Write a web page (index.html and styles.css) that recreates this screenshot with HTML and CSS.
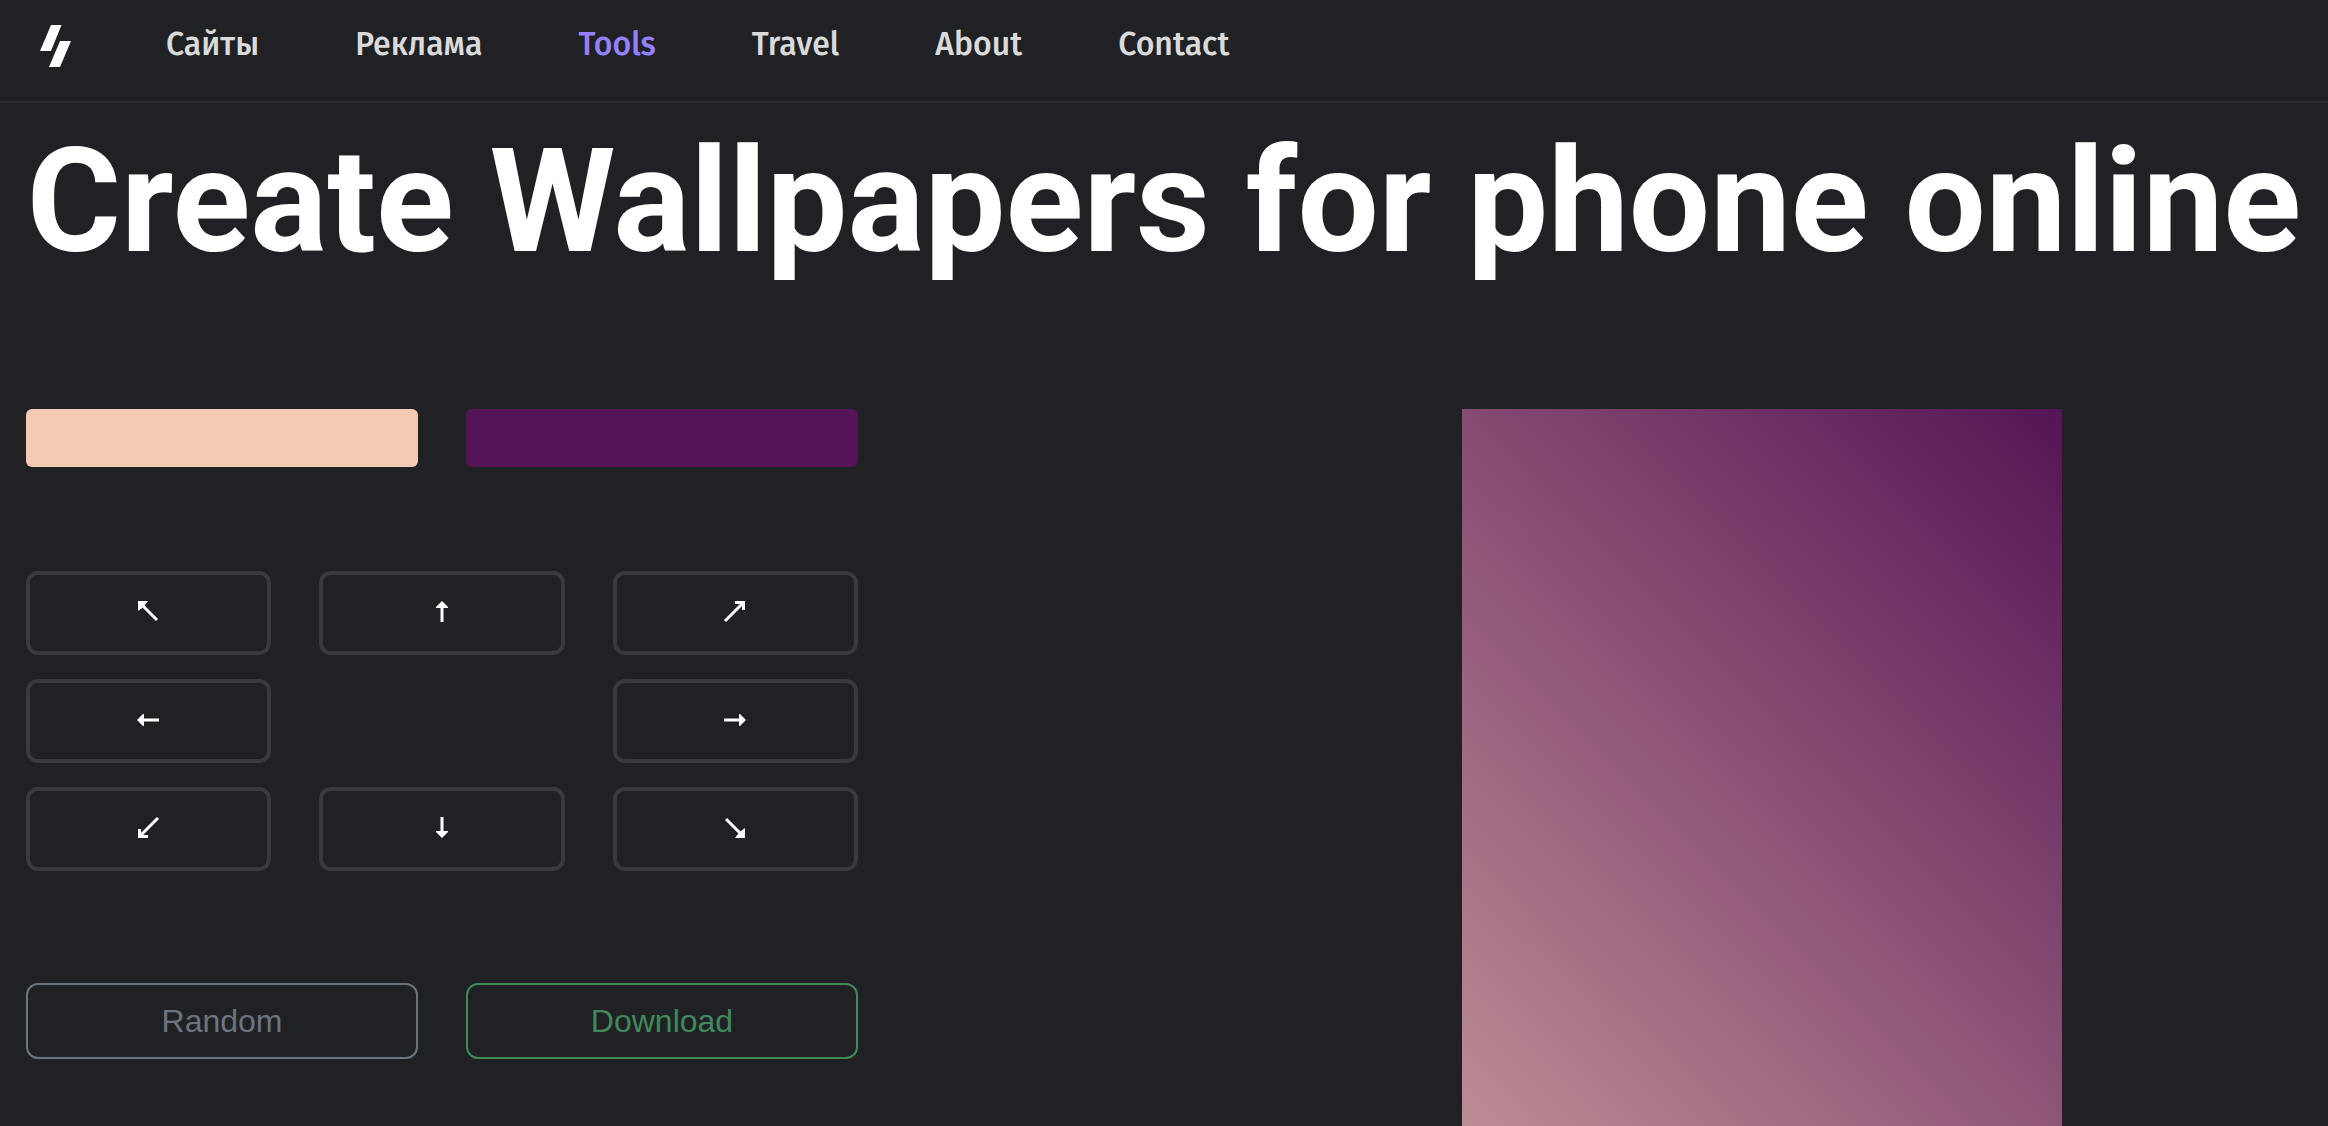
FILE: index.html
```html
<!DOCTYPE html>
<html lang="en">
<head>
<meta charset="utf-8">
<meta name="viewport" content="width=device-width, initial-scale=1">
<title>Create Wallpapers for phone online</title>
<link rel="stylesheet" href="styles.css">
</head>
<body>
<header class="header">
  <a class="logo" href="#" aria-label="Home">
    <svg width="32" height="42" viewBox="0 0 32 42" aria-hidden="true"><path fill="#fff" d="M11 0H21.500L11 26H0Z M20 16H31L20 42H9Z"/></svg>
  </a>
  <nav class="nav">
    <a class="nav-link" href="#">Сайты</a>
    <a class="nav-link" href="#">Реклама</a>
    <a class="nav-link nav-link-active" href="#">Tools</a>
    <a class="nav-link" href="#">Travel</a>
    <a class="nav-link" href="#">About</a>
    <a class="nav-link" href="#">Contact</a>
  </nav>
</header>
<main class="main">
  <h1 class="title">Create Wallpapers for phone online</h1>
  <div class="workspace">
    <div class="controls">
      <div class="pair">
        <input class="swatch" type="color" value="#f4cab5" aria-label="First color">
        <input class="swatch" type="color" value="#551455" aria-label="Second color">
      </div>
      <div class="directions">
        <button class="direction" type="button" aria-label="Top left"><svg class="arrow" viewBox="0 0 24 24"><path class="shaft" d="M5 4L20 19"/><path d="M1 0H11L8 4L5 7L1 10Z"/></svg></button>
        <button class="direction" type="button" aria-label="Top"><svg class="arrow" viewBox="0 0 24 24"><path class="shaft" d="M12 5V21"/><path d="M12 0L18 6V7H6V6Z"/></svg></button>
        <button class="direction" type="button" aria-label="Top right"><svg class="arrow" viewBox="0 0 24 24"><path class="shaft" d="M2 20L20 2M12 1.500H20.500V9"/></svg></button>
        <button class="direction" type="button" aria-label="Left"><svg class="arrow" viewBox="0 0 24 24"><path class="shaft" d="M5 11H22"/><path d="M0 11L6 5H7V17H6Z"/></svg></button>
        <button class="direction direction-right" type="button" aria-label="Right"><svg class="arrow" viewBox="0 0 24 24"><path class="shaft" d="M1 11H18"/><path d="M23 11L17 5H16V17H17Z"/></svg></button>
        <button class="direction" type="button" aria-label="Bottom left"><svg class="arrow" viewBox="0 0 24 24"><path class="shaft" d="M21 1L3 19M2.500 12V19.500H11"/></svg></button>
        <button class="direction" type="button" aria-label="Bottom"><svg class="arrow" viewBox="0 0 24 24"><path class="shaft" d="M12 0V16"/><path d="M12 21L18 15V14H6V15Z"/></svg></button>
        <button class="direction" type="button" aria-label="Bottom right"><svg class="arrow" viewBox="0 0 24 24"><path class="shaft" d="M3 2L18 17"/><path d="M22 21H12L15 17L18 14L22 11Z"/></svg></button>
      </div>
      <div class="pair">
        <button class="action action-random" type="button">Random</button>
        <button class="action action-download" type="button">Download</button>
      </div>
    </div>
    <div class="preview-column">
      <div class="preview" role="img" aria-label="Wallpaper preview"></div>
    </div>
  </div>
</main>
</body>
</html>
```
FILE: styles.css
```css
* {
  box-sizing: border-box;
}

body {
  margin: 0;
  background: #202125;
  color: #fff;
  font-family: "Liberation Sans", Arial, sans-serif;
}

.header {
  display: flex;
  align-items: flex-start;
  gap: 96px;
  padding: 24px 40px 34px;
  border-bottom: 2px solid #2d2e2f;
}

.logo {
  display: flex;
  width: 30px;
  padding-top: 1px;
}

.logo svg {
  flex: none;
}

.nav {
  display: flex;
  gap: 96px;
}

.nav-link {
  color: #dadada;
  font: 500 32px/40px "Fira Sans", "Noto Sans", sans-serif;
  text-decoration: none;
}

.nav-link-active {
  color: #9580ff;
}

.main {
  padding: 0 26px;
}

.title {
  margin: 0 0 108px;
  font: 700 144px/198px Roboto, sans-serif;
  text-align: center;
  white-space: nowrap;
}

.workspace {
  display: grid;
  grid-template-columns: minmax(0, 832px) minmax(0, 1080px);
  justify-content: space-between;
  align-items: start;
}

.controls {
  display: grid;
}

.pair {
  display: grid;
  grid-template-columns: 1fr 1fr;
  gap: 48px;
}

.swatch {
  width: 100%;
  height: 58px;
  padding: 0;
  border: 0;
  border-radius: 6px;
  background: none;
  overflow: hidden;
}

.swatch::-webkit-color-swatch-wrapper {
  padding: 0;
}

.swatch::-webkit-color-swatch {
  border: 0;
}

.directions {
  display: grid;
  grid-template-columns: repeat(3, 1fr);
  gap: 24px 48px;
  margin: 104px 0 112px;
}

.direction {
  display: flex;
  align-items: center;
  justify-content: center;
  height: 84px;
  padding: 0;
  border: 4px solid #383a3e;
  border-radius: 12px;
  background: none;
}

.direction-right {
  grid-column: 3;
}

.arrow {
  width: 24px;
  height: 24px;
  fill: #fff;
}

.shaft {
  fill: none;
  stroke: #fff;
  stroke-width: 3px;
}

.action {
  height: 76px;
  padding: 0;
  border: 2px solid;
  border-radius: 12px;
  background: none;
  font: 400 32px/48px "Liberation Sans", Arial, sans-serif;
}

.action-random {
  color: #6c757d;
}

.action-download {
  color: #41895b;
}

.preview-column {
  display: flex;
  justify-content: center;
}

.preview {
  width: 600px;
  aspect-ratio: 3 / 7;
  background: linear-gradient(45deg, #f4cab5, #551455);
}
```
